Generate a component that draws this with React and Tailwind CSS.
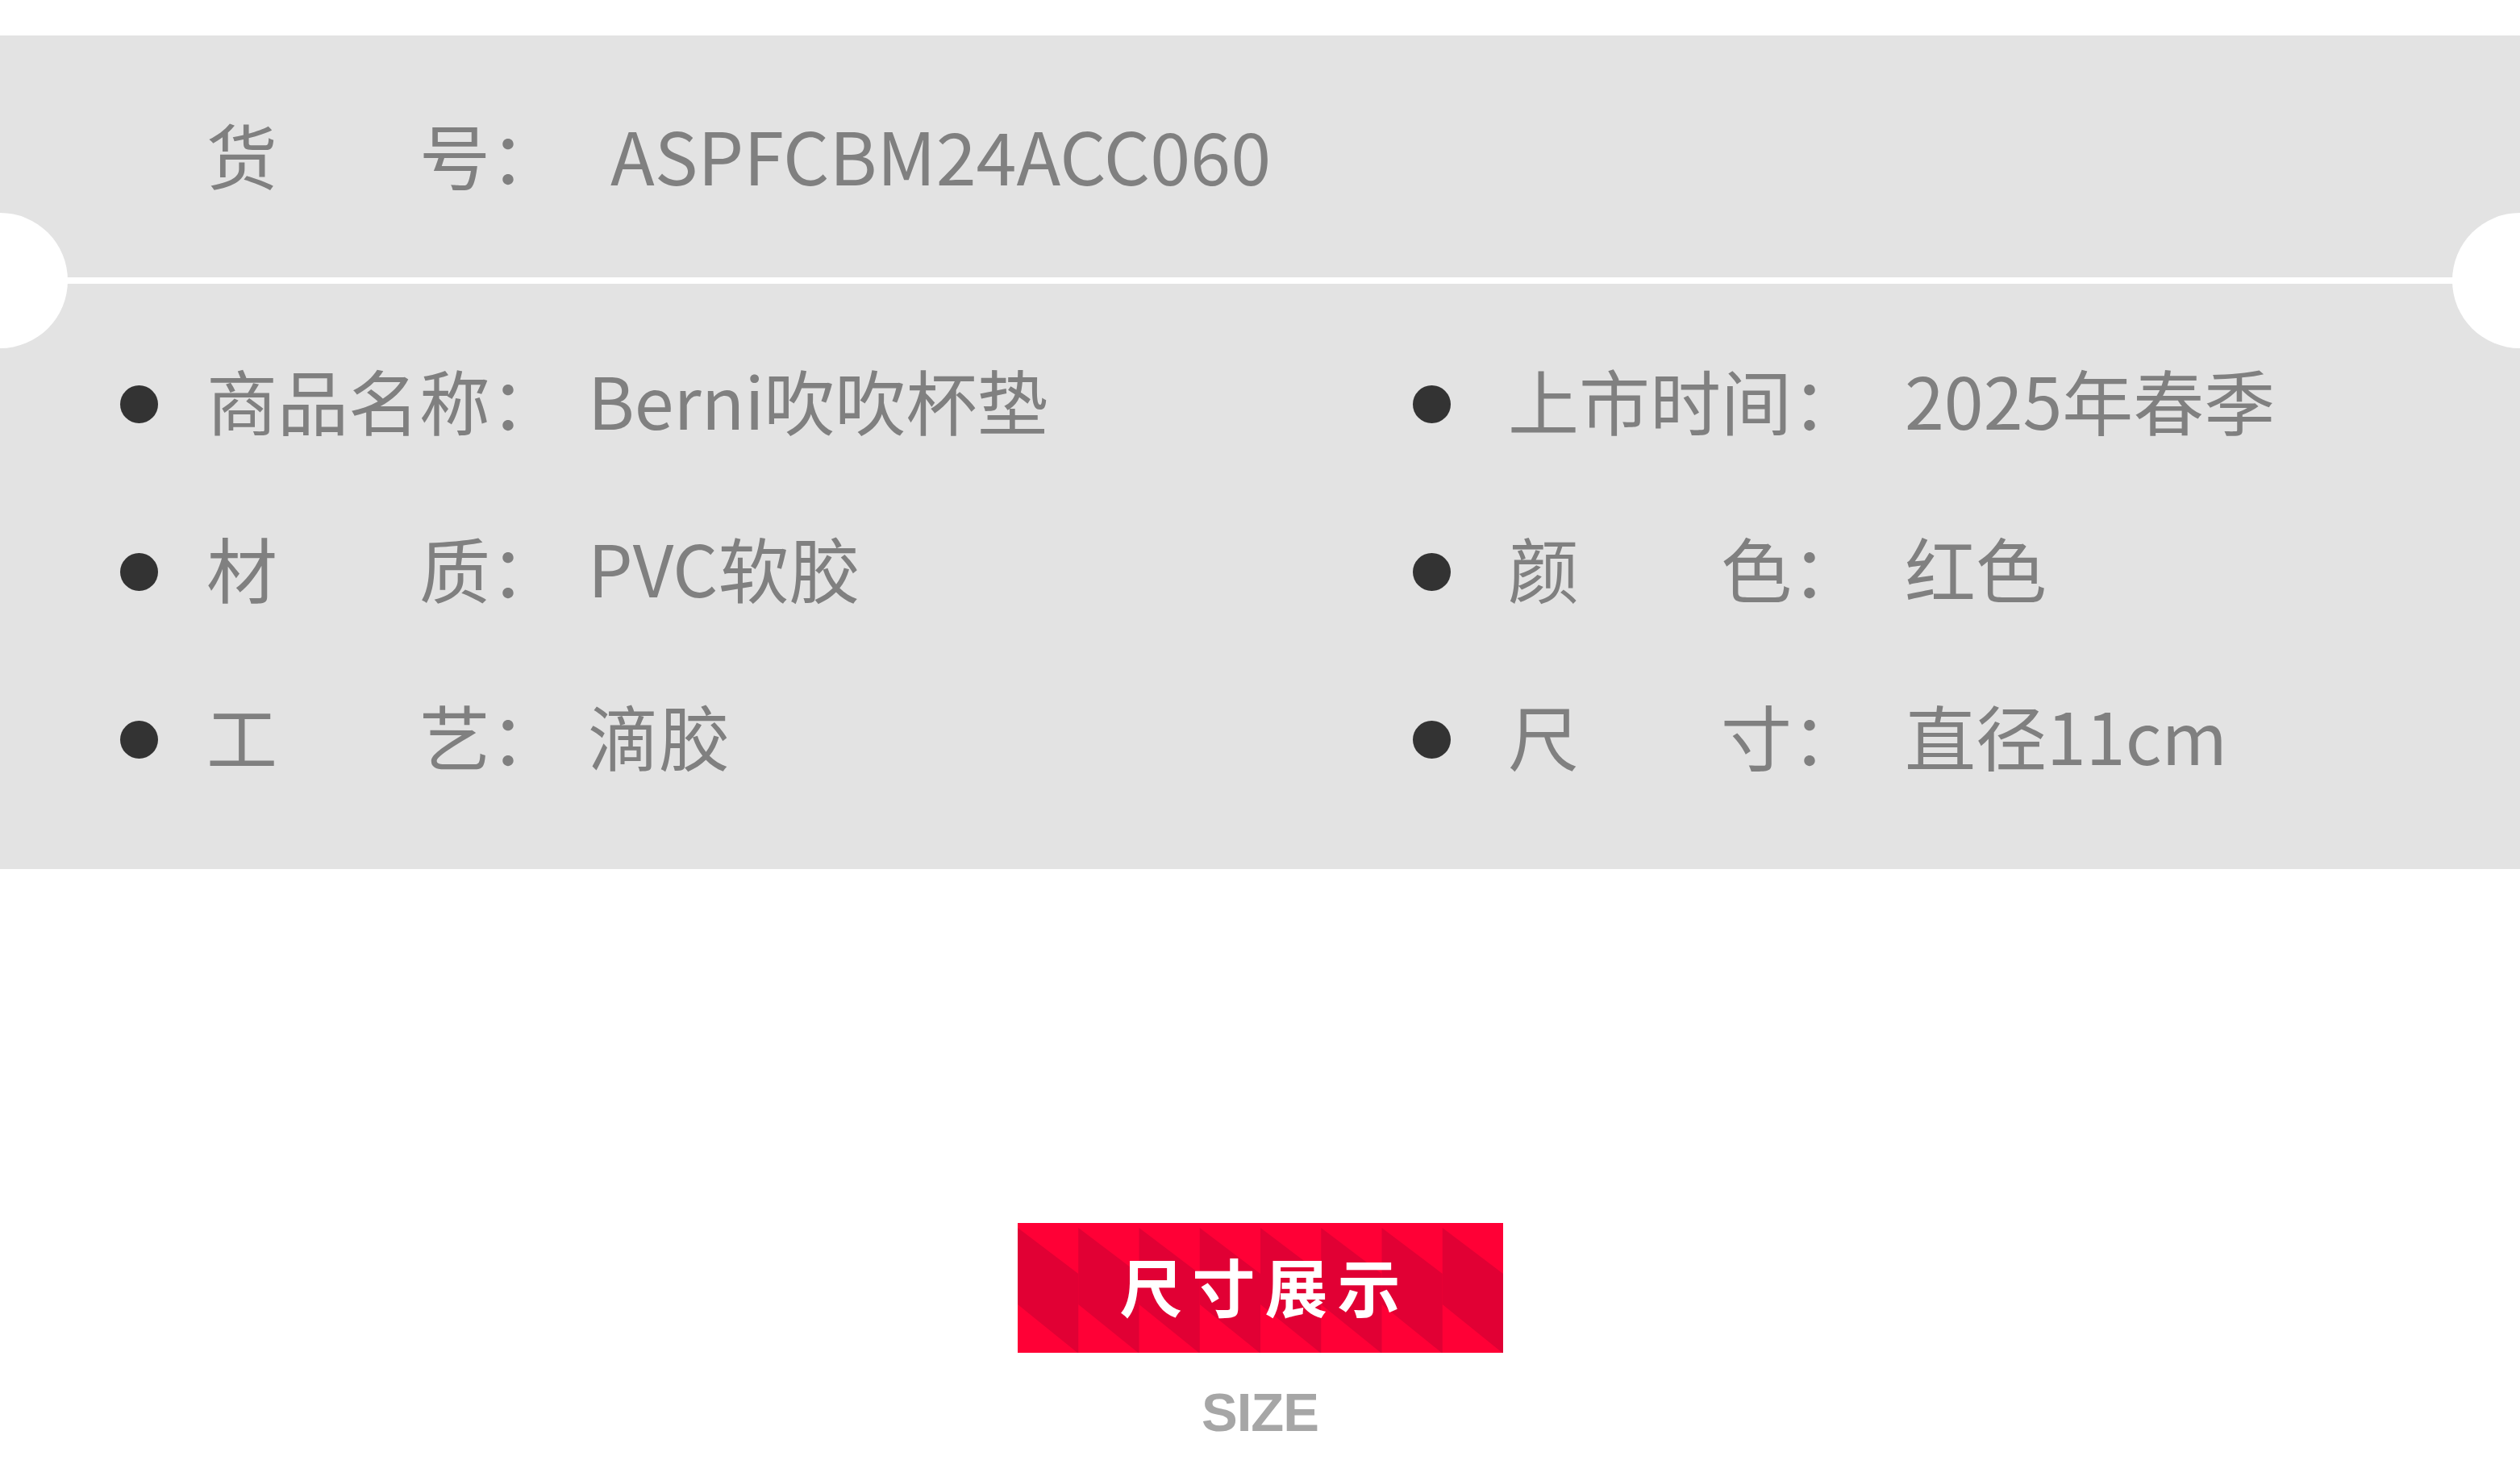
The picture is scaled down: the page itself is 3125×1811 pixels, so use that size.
import React from "react";

const font = { fontFamily: '"Noto Sans CJK SC", "Noto Sans", sans-serif' };

function Row({ label, value, right }) {
  return (
    <div className="flex h-[208px] items-center">
      <div className="mt-[12px] h-[47px] w-[47px] shrink-0 rounded-full bg-[#333333]" />
      <div
        className={
          right
            ? "ml-[71px] w-[492px] shrink-0 whitespace-pre text-[88px] leading-none text-[#808080]"
            : "ml-[60px] w-[473px] shrink-0 whitespace-pre text-[88px] leading-none text-[#808080]"
        }
      >
        {label}
      </div>
      <div className="whitespace-pre text-[88px] leading-none text-[#808080]">{value}</div>
    </div>
  );
}

function BannerPattern() {
  const strips = [0, 1, 2, 3, 4, 5, 6, 7];
  const w = 602 / 8;
  return (
    <svg
      className="absolute inset-0"
      width="602"
      height="161"
      viewBox="0 0 602 161"
      preserveAspectRatio="none"
    >
      <rect x="0" y="0" width="602" height="161" fill="#ff0036" />
      {strips.map((i) => {
        const x0 = i * w;
        const x1 = x0 + w;
        return (
          <polygon
            key={i}
            points={`${x0},6 ${x1},63 ${x1},161 ${x1 - 1},161 ${x0},101`}
            fill="#e10034"
          />
        );
      })}
    </svg>
  );
}

export default function App() {
  return (
    <div className="h-[1811px] w-[3125px] overflow-hidden bg-white pt-[44px]" style={font}>
      <section className="relative h-[1034px] w-full bg-[#e3e3e3]">
        <div className="absolute left-[-84px] top-[220px] h-[168px] w-[168px] rounded-full bg-white" />
        <div className="absolute right-[-84px] top-[220px] h-[168px] w-[168px] rounded-full bg-white" />

        <div className="flex h-[300px] items-start pl-[256px] pt-[102px]">
          <div className="w-[501px] shrink-0 whitespace-pre text-[88px] leading-none text-[#808080]">
            货　　号：
          </div>
          <div className="text-[90px] leading-none text-[#808080]">ASPFCBM24ACC060</div>
        </div>

        <div className="h-[8px] w-full bg-white" />

        <div className="grid grid-cols-[1603px_1fr] pl-[149px] pt-[39px]">
          <div className="flex flex-col">
            <Row label="商品名称：" value="Berni吹吹杯垫" />
            <Row label="材　　质：" value="PVC软胶" />
            <Row label="工　　艺：" value="滴胶" />
          </div>
          <div className="flex flex-col">
            <Row right label="上市时间：" value="2025年春季" />
            <Row right label="颜　　色：" value="红色" />
            <Row right label="尺　　寸：" value="直径11cm" />
          </div>
        </div>
      </section>

      <div className="mx-auto mt-[439px] flex w-[602px] flex-col items-center">
        <div className="relative flex h-[161px] w-[602px] items-center justify-center pb-[8px]">
          <BannerPattern />
          <span className="relative pl-[12px] text-[78px] font-bold leading-none tracking-[12px] text-white">
            尺寸展示
          </span>
        </div>
        <div
          className="mt-[40px] text-[67px] font-bold leading-none tracking-[-1px] text-[#a6a6a6]"
          style={{ fontFamily: '"Liberation Sans", Arial, sans-serif' }}
        >
          SIZE
        </div>
      </div>
    </div>
  );
}
